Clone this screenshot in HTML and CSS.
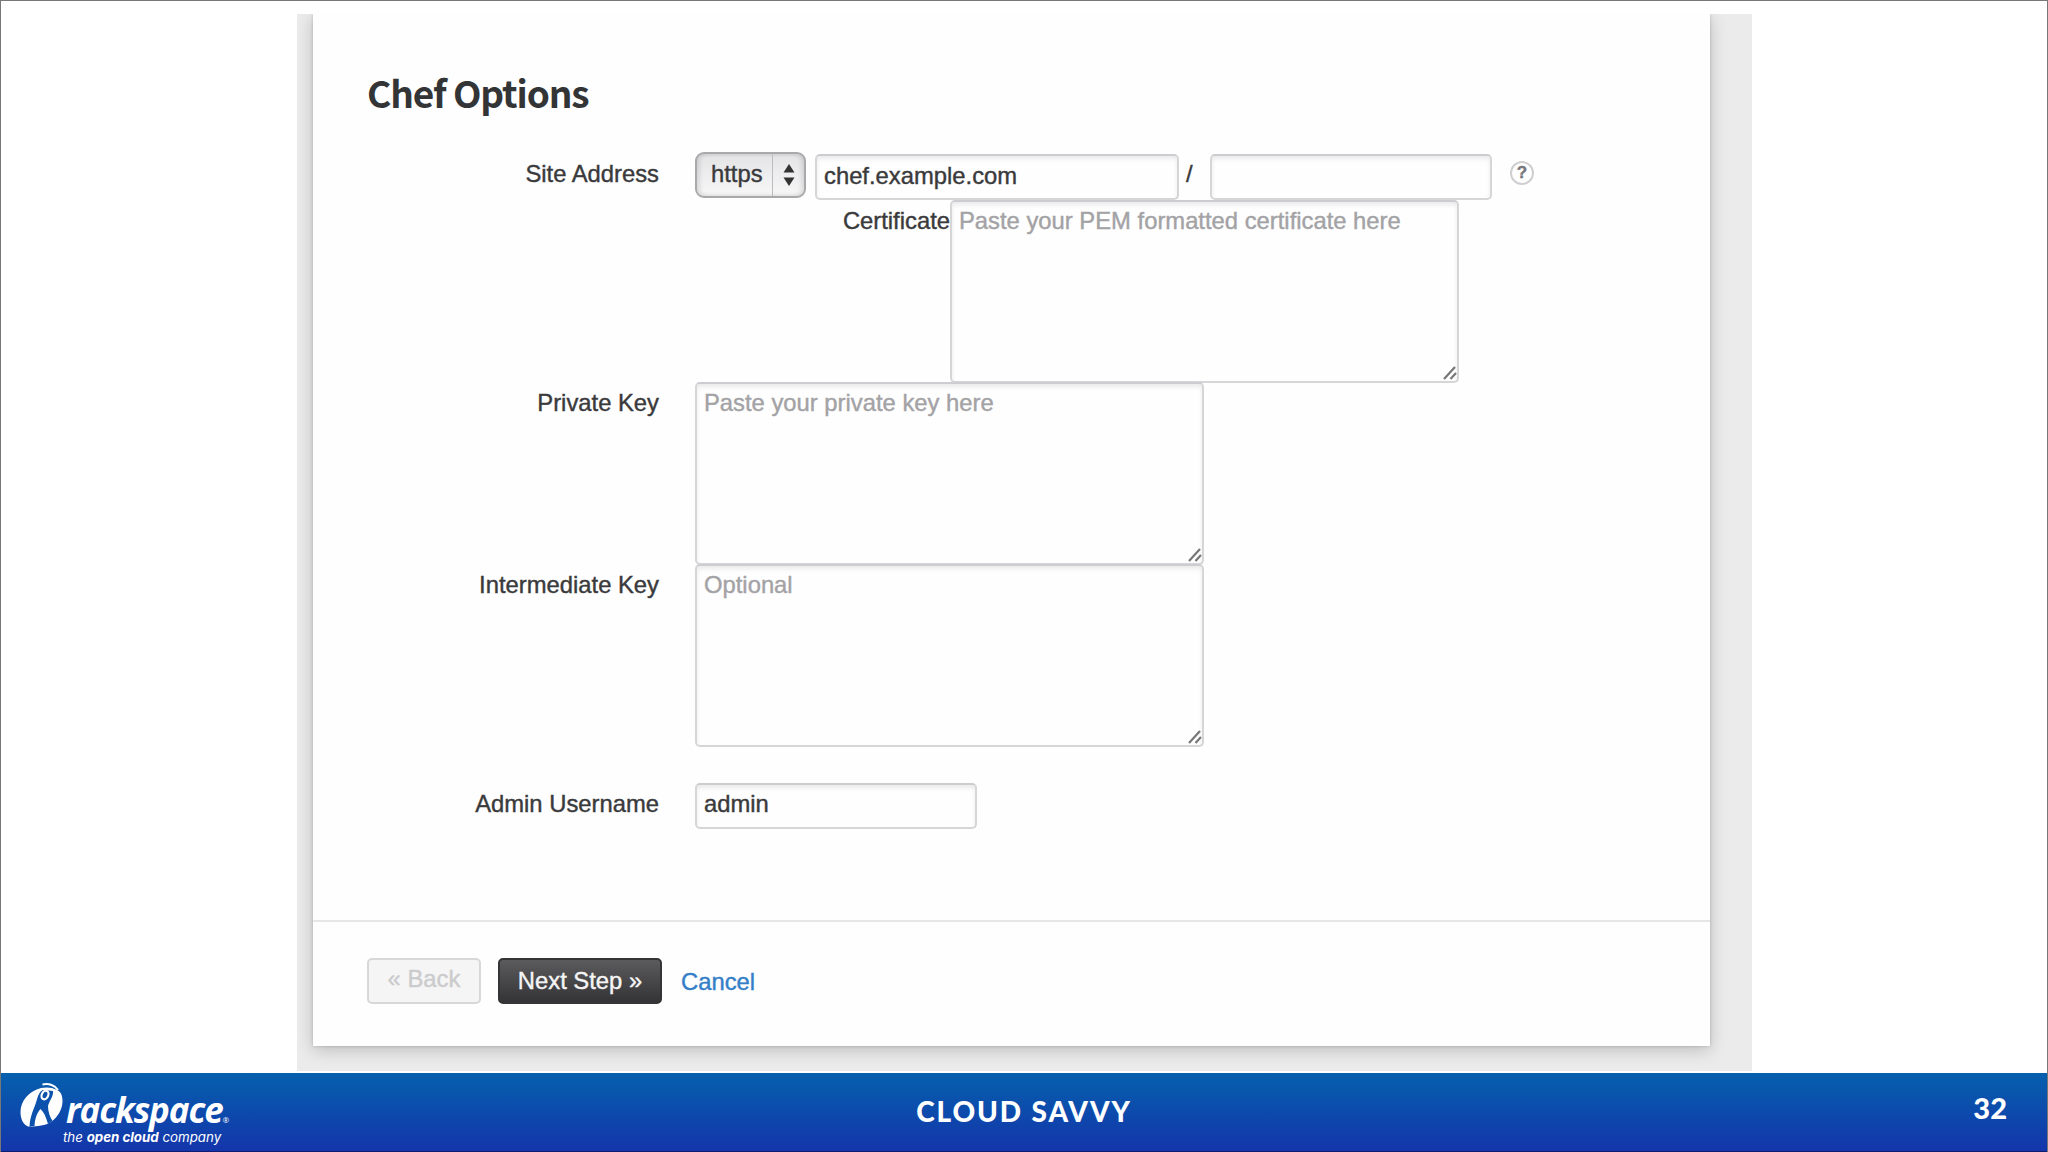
FILE: index.html
```html
<!doctype html>
<html lang="en">
  <head>
    <meta charset="utf-8" />
    <title>Chef Options</title>
    <link rel="stylesheet" href="styles.css">
  </head>
  <body>
    <div class="slide">
      <main class="stage">
        <form class="panel">
          <div class="panel-body">
            <h1>Chef Options</h1>

            <div class="row row-address">
              <label class="label label-site" for="host">Site Address</label>
              <div class="select">
                <span class="select-value">https</span>
                <span class="select-arrows">
                  <svg width="12" height="24" viewBox="0 0 12 24">
                    <path d="M6 1L11.500 9.500H.5zM6 23L.5 14.500H11.500z" fill="#333" />
                  </svg>
                </span>
              </div>
              <input class="input input-host" id="host" type="text" value="chef.example.com" />
              <span class="slash">/</span>
              <input class="input input-path" type="text" aria-label="Path" />
              <span class="help">?</span>
            </div>

            <div class="row">
              <label class="label label-inline" for="certificate">Certificate</label>
              <div class="textarea-wrap">
                <textarea class="textarea" id="certificate" placeholder="Paste your PEM formatted certificate here"></textarea>
                <svg class="grip" width="14" height="14" viewBox="0 0 14 14">
                  <path d="M1 13L12 1M7.500 13L13 7" stroke="#777" stroke-width="2.2" />
                </svg>
              </div>
            </div>

            <div class="row">
              <label class="label" for="privateKey">Private Key</label>
              <div class="textarea-wrap">
                <textarea class="textarea" id="privateKey" placeholder="Paste your private key here"></textarea>
                <svg class="grip" width="14" height="14" viewBox="0 0 14 14">
                  <path d="M1 13L12 1M7.500 13L13 7" stroke="#777" stroke-width="2.2" />
                </svg>
              </div>
            </div>

            <div class="row">
              <label class="label" for="intermediateKey">Intermediate Key</label>
              <div class="textarea-wrap">
                <textarea class="textarea" id="intermediateKey" placeholder="Optional"></textarea>
                <svg class="grip" width="14" height="14" viewBox="0 0 14 14">
                  <path d="M1 13L12 1M7.500 13L13 7" stroke="#777" stroke-width="2.2" />
                </svg>
              </div>
            </div>

            <div class="row row-admin">
              <label class="label" for="admin">Admin Username</label>
              <input class="input input-admin" id="admin" type="text" value="admin" />
            </div>
          </div>

          <div class="actions">
            <button class="button button-back" type="button" disabled>« Back</button>
            <button class="button button-next" type="button">Next Step »</button>
            <a class="cancel">Cancel</a>
          </div>
        </form>
      </main>

      <footer class="footer">
        <div class="brand">
          <svg class="brand-mark" width="44" height="44" viewBox="0 0 44 44">
            <!-- disc -->
            <path d="M21 5C9 8 .5 18 .5 29C.5 36 3 41 8 43.500C13 44 25 43 31 39C38 34 42.500 26 42.500 18C42.500 12 40.500 8.500 37 7C32 4 26 4 21 5Z" fill="#fff" />
            <!-- figure -->
            <path d="M23 7L33 8C33.500 14 29.500 17 28 23C28 29 30 34 32.500 38L28 41C26 34 24 29 20.500 26C17 30 15 35 14.500 43L9.500 43.500C10 33 14 26 16.500 18C18 13 19 9 23 7Z" fill="#0c52ac" />
            <!-- head and raised arm -->
            <ellipse cx="25" cy="12" rx="3.200" ry="4.500" transform="rotate(25 25 12)" fill="none" stroke="#fff" stroke-width="2.200" />
            <path d="M22.500 1.500C29 0 35 2.500 38 7" fill="none" stroke="#fff" stroke-width="2" />
          </svg>
          <div class="brand-text">
            <div class="brand-name">rackspace<span class="reg">®</span></div>
            <div class="brand-tag">the <b>open cloud</b> company</div>
          </div>
        </div>
        <div class="footer-title">CLOUD SAVVY</div>
        <div class="page-number">32</div>
      </footer>
    </div>
  </body>
</html>
```

FILE: styles.css
```css
* {
  box-sizing: border-box;
}

body {
  margin: 0;
  font-family: 'Liberation Sans', Arial, sans-serif;
  font-size: 23.8px;
  color: #3a3a3c;
  background: #fff;
}

.slide {
  display: flex;
  flex-direction: column;
  width: 2048px;
  height: 1152px;
  border: 1px solid #777;
  border-bottom: 0;
  overflow: hidden;
}

/* Panel on its grey backdrop */
.stage {
  width: 1455px;
  height: 1057px;
  margin: 13px 0 2px 296px;
  padding: 0 42px 0 16px;
  background: #ecebec;
  overflow: hidden;
  flex-shrink: 0;
}

.panel {
  width: 1397px;
  height: 1032px;
  background: #fefefe;
  box-shadow: 0 4px 16px rgba(0, 0, 0, 0.2), 0 0 3px rgba(0, 0, 0, 0.18);
  -webkit-text-stroke: 0.4px;
}

.panel-body {
  height: 908px;
  padding: 52px 0 0 54px;
  border-bottom: 2px solid #e6e5e7;
}

h1 {
  margin: 0;
  height: 86px;
  font-family: 'Noto Sans CJK JP', 'Noto Sans', sans-serif;
  font-size: 37px;
  font-weight: 700;
  letter-spacing: -1.1px;
  line-height: 52px;
  color: #333436;
  -webkit-text-stroke: 0;
}

/* Form rows */
.row {
  display: flex;
  align-items: flex-start;
}

.row-address {
  height: 48px;
}

.label {
  width: 292px;
  margin-right: 36px;
  padding-top: 8px;
  line-height: 26px;
  text-align: right;
  white-space: nowrap;
}

.label-site {
  padding-top: 9px;
}

.label-inline {
  width: 583px;
  margin-right: 0;
}

.select {
  display: flex;
  width: 111px;
  height: 46px;
  margin-right: 9px;
  border: 2px solid #a9a8ab;
  border-radius: 9px;
  background: linear-gradient(#e4e3e5, #f7f7f8);
  box-shadow: inset 3px 0 4px rgba(0, 0, 0, 0.1), inset -3px 0 4px rgba(0, 0, 0, 0.1);
}

.select-value {
  width: 76px;
  padding-left: 14px;
  border-right: 1px solid #bdbcbf;
  line-height: 40px;
}

.select-arrows {
  flex: 1;
  display: flex;
  align-items: center;
  justify-content: center;
}

.input,
.textarea {
  display: block;
  margin: 0;
  border: 2px solid #d6d5d8;
  border-top-color: #cdccd0;
  border-radius: 5px;
  background: #fefefe;
  box-shadow: inset 0 3px 4px rgba(0, 0, 0, 0.08);
  color: inherit;
  font: inherit;
  outline: none;
  -webkit-text-stroke: inherit;
}

.input {
  height: 46px;
  padding: 0 7px 3px;
}

.row-address .input {
  margin-top: 2px;
}

.input-host {
  width: 364px;
}

.slash {
  width: 31px;
  padding: 9px 0 0 7px;
  line-height: 26px;
}

.input-path {
  width: 282px;
}

.help {
  width: 24px;
  height: 24px;
  margin: 9px 0 0 18px;
  border: 2px solid #cfced1;
  border-radius: 50%;
  color: #77767a;
  font-size: 17px;
  font-weight: 700;
  line-height: 20px;
  text-align: center;
}

.textarea-wrap {
  position: relative;
  width: 509px;
  height: 182px;
}

.textarea {
  width: 509px;
  height: 183px;
  padding: 6px 7px;
  line-height: 26px;
  resize: none;
}

.textarea::placeholder {
  color: #a3a2a5;
  opacity: 1;
}

.grip {
  position: absolute;
  right: 2px;
  bottom: 2px;
}

.row-admin {
  margin-top: 37px;
}

.input-admin {
  width: 282px;
  padding-bottom: 5px;
}

/* Buttons */
.actions {
  display: flex;
  align-items: flex-start;
  padding: 36px 0 0 54px;
}

.button {
  height: 46px;
  padding: 0;
  border-radius: 5px;
  font: inherit;
  -webkit-text-stroke: inherit;
}

.button-back {
  width: 114px;
  margin-right: 17px;
  padding-bottom: 4px;
  border: 2px solid #d8d8d9;
  background: #f5f5f6;
  color: #cbcbcc;
}

.button-next {
  width: 164px;
  margin-right: 19px;
  border: 2px solid #353437;
  background: linear-gradient(#5b5a5d, #343336);
  color: #f5f5f5;
}

.cancel {
  padding-top: 11px;
  line-height: 26px;
  color: #347ec9;
}

/* Footer */
.footer {
  display: grid;
  grid-template-columns: 1fr auto 1fr;
  height: 79px;
  margin: 0 -1px;
  padding: 0 41px 0 20px;
  border-bottom: 1px solid #101c70;
  background: linear-gradient(#0560ad, #1435ab);
  color: #fff;
}

.brand {
  display: flex;
  align-items: flex-start;
}

.brand-mark {
  margin-top: 10px;
  overflow: visible;
}

.brand-name {
  height: 57px;
  padding-left: 2px;
  font-family: 'Open Sans', sans-serif;
  font-size: 35px;
  font-style: italic;
  font-weight: 700;
  letter-spacing: -1.15px;
  line-height: 73px;
}

.reg {
  font-size: 8px;
  font-style: normal;
  font-weight: 400;
}

.brand-tag {
  margin-left: -1px;
  font-family: Inter, sans-serif;
  font-size: 13.3px;
  font-style: italic;
  line-height: 15px;
  white-space: nowrap;
}

.footer-title,
.page-number {
  font-family: Lato, sans-serif;
  font-size: 28px;
  font-weight: 900;
  line-height: 76px;
}

.footer-title {
  padding-left: 21px;
  letter-spacing: 1.9px;
}

.page-number {
  font-size: 29px;
  line-height: 70px;
  text-align: right;
}
```
